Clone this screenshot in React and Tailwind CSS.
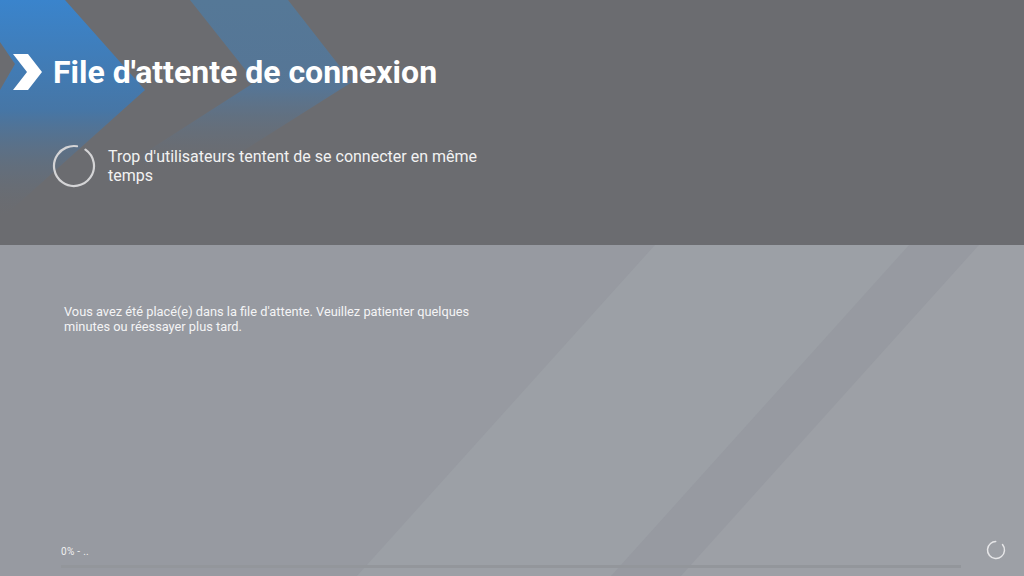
import React from 'react';

// Loader ring with a small gap, like the native spinner
function Ring({ size, r, stroke, gap, rotate, color }) {
  const c = 2 * Math.PI * r;
  const mid = size / 2;
  return (
    <svg width={size} height={size} viewBox={`0 0 ${size} ${size}`} className="shrink-0">
      <circle
        cx={mid}
        cy={mid}
        r={r}
        fill="none"
        stroke={color}
        strokeWidth={stroke}
        strokeLinecap="round"
        strokeDasharray={`${c - gap} ${gap}`}
        transform={`rotate(${rotate} ${mid} ${mid})`}
      />
    </svg>
  );
}

function TopBackdrop() {
  return (
    <svg className="absolute inset-0" width="1024" height="245" viewBox="0 0 1024 245">
      <defs>
        <linearGradient id="chev1" x1="0" y1="0" x2="0" y2="220" gradientUnits="userSpaceOnUse">
          <stop offset="0" stopColor="#3a84cc" />
          <stop offset="0.5" stopColor="#4676a6" />
          <stop offset="1" stopColor="#6b6c70" stopOpacity="0" />
        </linearGradient>
        <linearGradient id="chev2" x1="0" y1="0" x2="0" y2="175" gradientUnits="userSpaceOnUse">
          <stop offset="0" stopColor="#557897" />
          <stop offset="0.5" stopColor="#52779c" stopOpacity="0.85" />
          <stop offset="1" stopColor="#6b6c70" stopOpacity="0" />
        </linearGradient>
      </defs>
      <polygon points="0,0 65,0 145,90 0,220 0,90 15,64 0,42" fill="url(#chev1)" />
      <polygon points="190,0 288,0 352,82 205,175 110,175 255,82" fill="url(#chev2)" />
    </svg>
  );
}

function BottomBackdrop() {
  return (
    <svg className="absolute inset-0" width="1024" height="331" viewBox="0 0 1024 331">
      <polygon points="655,0 909,0 611,331 357,331" fill="#9ca0a6" />
      <polygon points="979,0 1024,0 1024,331 681,331" fill="#9da0a6" />
    </svg>
  );
}

export default function App() {
  return (
    <div className="w-[1024px] h-[576px] overflow-hidden flex flex-col font-['Roboto',sans-serif] text-white">
      {/* Header panel */}
      <div className="relative h-[245px] shrink-0 bg-[#6b6c70]">
        <TopBackdrop />
        <div className="relative flex flex-col">
          <div className="flex items-center gap-[10px] pl-[12px] pt-[53px]">
            <svg width="31" height="38" viewBox="0 0 31 38" className="shrink-0">
              <polygon points="1,1 16,1 30,19 16,37 1,37 15,19" fill="#ffffff" />
            </svg>
            <h1 className="text-[32px] leading-[38px] font-bold">File d'attente de connexion</h1>
          </div>
          <div className="flex items-start gap-[12px] pl-[52px] pt-[53px]">
            <Ring size={44} r={20} stroke={2.2} gap={10} rotate={-55} color="#d4d4d6" />
            <p className="mt-[3px] w-[390px] text-[16px] leading-[19px] text-[#f2f2f2]">
              Trop d'utilisateurs tentent de se connecter en même temps
            </p>
          </div>
        </div>
      </div>

      {/* Body panel */}
      <div className="relative flex-1 bg-[#979aa1] flex flex-col">
        <BottomBackdrop />
        <p className="relative pl-[64px] pt-[59px] w-[490px] text-[12.8px] leading-[15px] text-[#f4f4f5]">
          Vous avez été placé(e) dans la file d'attente. Veuillez patienter quelques minutes ou réessayer plus tard.
        </p>
        <div className="relative mt-auto flex items-end pl-[61px] pr-[18px] pb-[8px]">
          <div className="flex-1 flex flex-col">
            <span className="text-[10px] leading-[12px] tracking-[0.3px] text-[#f0f0f0]">0% - ..</span>
            <div className="mt-[7px] h-[3px] bg-[#93969b]" />
          </div>
          <div className="ml-[25px] mb-[8px]">
            <Ring size={20} r={8.5} stroke={1.5} gap={8} rotate={-40} color="#e6e6e8" />
          </div>
        </div>
      </div>
    </div>
  );
}
